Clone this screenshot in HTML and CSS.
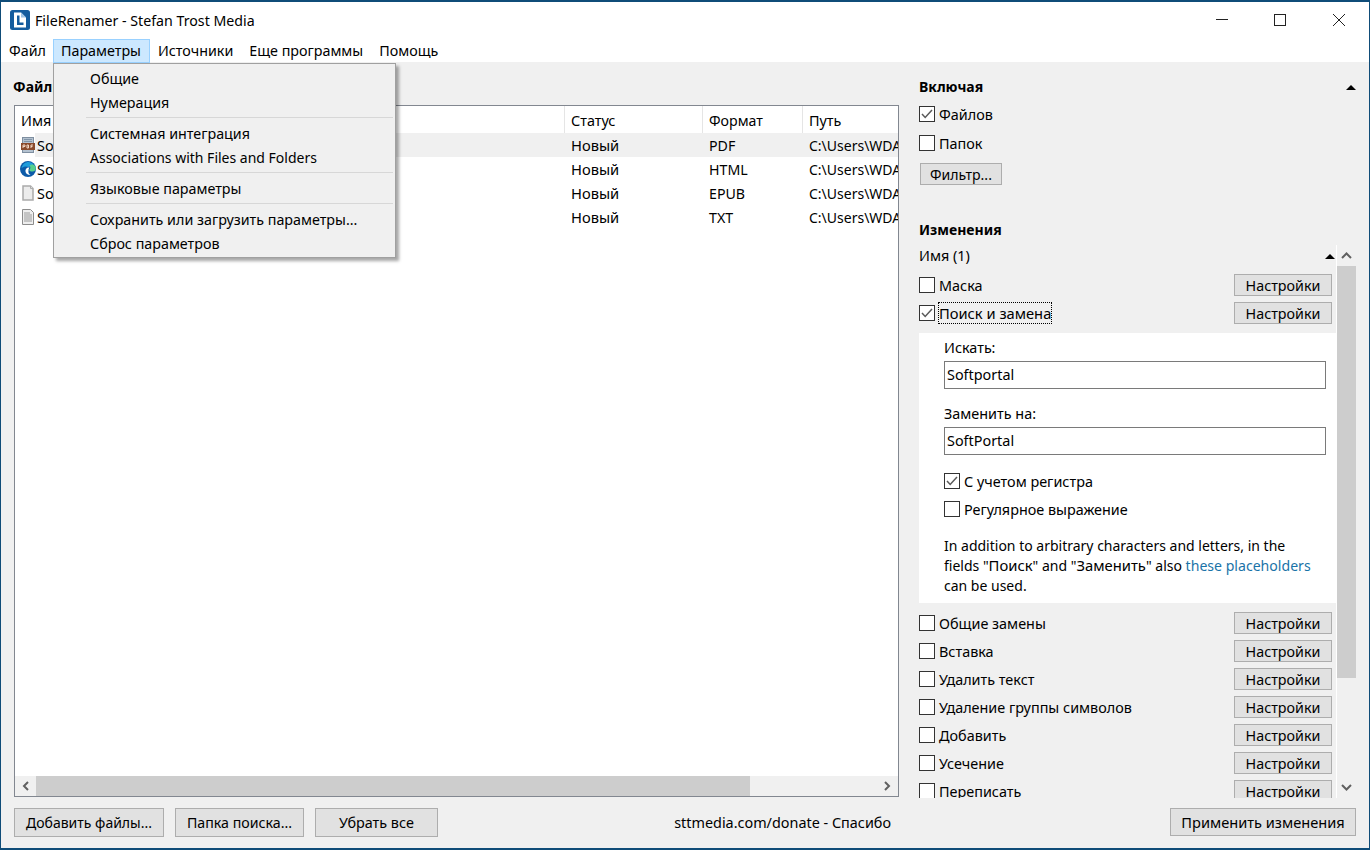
FILE: index.html
```html
<!DOCTYPE html>
<html lang="ru">
<head>
    <meta charset="UTF-8">
    <title>FileRenamer - Stefan Trost Media</title>
    <link rel="stylesheet" href="styles.css">
</head>
<body>
<div class="window">
    <div class="titlebar">
        <svg class="logo" width="22" height="22" viewBox="0 0 22 22">
            <rect width="20" height="20" x="1" y="1" rx="2.5" fill="#145c9e"/>
            <path d="M5 3.500h7l5 5v10H5z" fill="#fff"/>
            <path d="M8 6.500h2.500v7H14.500v2.500H8z" fill="#145c9e"/>
            <path d="M12 3.500l5 5h-5z" fill="#9fc4e6"/>
        </svg>
        <span class="title">FileRenamer - Stefan Trost Media</span>
        <div class="win-buttons">
            <svg width="58" height="30" viewBox="0 0 58 30"><path d="M24 14.500h12" stroke="#222" fill="none"/></svg>
            <svg width="58" height="30" viewBox="0 0 58 30"><rect x="24.500" y="9.500" width="11" height="11" stroke="#222" fill="none"/></svg>
            <svg width="58" height="30" viewBox="0 0 58 30"><path d="M25 9l12 12M37 9L25 21" stroke="#222" fill="none"/></svg>
        </div>
    </div>

    <nav class="menubar">
        <span class="menu-item">Файл</span>
        <span class="menu-item active">Параметры</span>
        <span class="menu-item">Источники</span>
        <span class="menu-item">Еще программы</span>
        <span class="menu-item">Помощь</span>
    </nav>

    <div class="dropdown">
        <div class="drop-item">Общие</div>
        <div class="drop-item">Нумерация</div>
        <div class="drop-sep"></div>
        <div class="drop-item">Системная интеграция</div>
        <div class="drop-item en">Associations with Files and Folders</div>
        <div class="drop-sep"></div>
        <div class="drop-item">Языковые параметры</div>
        <div class="drop-sep"></div>
        <div class="drop-item">Сохранить или загрузить параметры...</div>
        <div class="drop-item">Сброс параметров</div>
    </div>

    <div class="main">
        <section class="left">
            <h2 class="heading left-heading">Файлы</h2>
            <div class="listbox">
                <div class="list-row list-head">
                    <div class="col col-name">Имя</div>
                    <div class="col col-status">Статус</div>
                    <div class="col col-format">Формат</div>
                    <div class="col col-path">Путь</div>
                </div>
                <div class="list-row file selected">
                    <div class="col col-name">
                        <svg class="file-icon" width="16" height="16" viewBox="0 0 16 16">
                            <rect x="2.500" y="0.500" width="11" height="15" fill="#b4c2d0" stroke="#7f8fa0"/>
                            <path d="M4 2.500h8M4 4.500h8" stroke="#8295a8" fill="none"/>
                            <rect x="1" y="6" width="14" height="7" fill="#8a4a2c"/>
                            <path d="M3 8v3M3 8h2v1.500H3M7 8v3h1.500V8zM11 8v3M11 8h2M11 9.500h1.500" stroke="#f0d6c4" fill="none"/>
                        </svg>
                        <span>So</span>
                    </div>
                    <div class="col col-status">Новый</div>
                    <div class="col col-format">PDF</div>
                    <div class="col col-path">C:\Users\WDAG</div>
                </div>
                <div class="list-row file">
                    <div class="col col-name">
                        <svg class="file-icon" width="16" height="16" viewBox="0 0 16 16">
                            <circle cx="8" cy="8" r="8" fill="#0c5aa8"/>
                            <path d="M1.500 7C2.500 3 5.500 1 8.500 1c2 0 4 1 5 2.500L9 6C6 5 3.500 5.500 1.500 7z" fill="#1f9ddb"/>
                            <path d="M9.500 4.500c2-1.500 4.500-1 5.500.5 1 1.500 1 3.500 0 4.500-1 1-3.500 1.500-5 .5-1-.7-1-1.500 0-2 .5-1 .5-2.500-.5-3.500z" fill="#58d08c"/>
                            <path d="M9.500 6.500C7 6 5 8 5.500 10.500c.3 2 2 3.500 5 3.500-1.500-1-2.500-2.500-2-4.500 0-1.500.5-2.500 1-3z" fill="#fff"/>
                        </svg>
                        <span>So</span>
                    </div>
                    <div class="col col-status">Новый</div>
                    <div class="col col-format">HTML</div>
                    <div class="col col-path">C:\Users\WDAG</div>
                </div>
                <div class="list-row file">
                    <div class="col col-name">
                        <svg class="file-icon" width="16" height="16" viewBox="0 0 16 16">
                            <path d="M3 1h7.500L13 3.500V15H3z" fill="#ececec" stroke="#ababab" stroke-width="1.500"/>
                            <path d="M10.500 1v2.500H13" fill="#e0e0e0" stroke="#ababab"/>
                        </svg>
                        <span>So</span>
                    </div>
                    <div class="col col-status">Новый</div>
                    <div class="col col-format">EPUB</div>
                    <div class="col col-path">C:\Users\WDAG</div>
                </div>
                <div class="list-row file">
                    <div class="col col-name">
                        <svg class="file-icon" width="16" height="16" viewBox="0 0 16 16">
                            <path d="M2.500.500h8l3 3v12h-11z" fill="#eeeeee" stroke="#8c8c8c"/>
                            <path d="M4 4h6M4 6h8M4 8h8M4 10h8M4 12h8" stroke="#9a9a9a" fill="none"/>
                        </svg>
                        <span>So</span>
                    </div>
                    <div class="col col-status">Новый</div>
                    <div class="col col-format">TXT</div>
                    <div class="col col-path">C:\Users\WDAG</div>
                </div>
                <div class="list-fill"></div>
                <div class="hscroll">
                    <svg width="21" height="20" viewBox="0 0 21 20"><path d="M13 6l-4 4 4 4" stroke="#606060" stroke-width="2" fill="none"/></svg>
                    <div class="hthumb"></div>
                    <div class="htrack"></div>
                    <svg width="21" height="20" viewBox="0 0 21 20"><path d="M8 6l4 4-4 4" stroke="#606060" stroke-width="2" fill="none"/></svg>
                </div>
            </div>
            <div class="footer">
                <button class="btn btn-add">Добавить файлы...</button>
                <button class="btn btn-folder">Папка поиска...</button>
                <button class="btn btn-clear">Убрать все</button>
                <span class="donate">sttmedia.com/donate - Спасибо</span>
            </div>
        </section>

        <section class="right">
            <div class="group-head">
                <h2 class="heading">Включая</h2>
                <span class="caret"></span>
            </div>
            <div class="check-line first">
                <span class="check"><svg width="14" height="14" viewBox="0 0 14 14"><path d="M2 7l3.200 3.500L12 3" stroke="#5a5a5a" stroke-width="1.500" fill="none"/></svg></span>
                <span>Файлов</span>
            </div>
            <div class="check-line"><span class="check"></span><span>Папок</span></div>
            <button class="btn btn-filter">Фильтр...</button>

            <h2 class="heading changes">Изменения</h2>
            <div class="scroller">
                <div class="scroll-content">
                    <div class="name-head"><span>Имя (1)</span><span class="caret"></span></div>
                    <div class="opt-list">
                        <div class="opt"><span class="check"></span><span>Маска</span><button class="btn btn-set">Настройки</button></div>
                        <div class="opt">
                            <span class="check"><svg width="14" height="14" viewBox="0 0 14 14"><path d="M2 7l3.200 3.500L12 3" stroke="#5a5a5a" stroke-width="1.500" fill="none"/></svg></span>
                            <span class="focused">Поиск и замена</span>
                            <button class="btn btn-set">Настройки</button>
                        </div>
                    </div>
                    <div class="panel">
                        <label class="field-label">Искать:</label>
                        <div class="input">Softportal</div>
                        <label class="field-label second">Заменить на:</label>
                        <div class="input">SoftPortal</div>
                        <div class="panel-checks">
                            <div class="panel-check">
                                <span class="check"><svg width="14" height="14" viewBox="0 0 14 14"><path d="M2 7l3.200 3.500L12 3" stroke="#5a5a5a" stroke-width="1.500" fill="none"/></svg></span>
                                <span>С учетом регистра</span>
                            </div>
                            <div class="panel-check"><span class="check"></span><span>Регулярное выражение</span></div>
                        </div>
                        <p class="hint">In addition to arbitrary characters and letters, in the<br>fields "<span class="ru">Поиск</span>" and "<span class="ru">Заменить</span>" also <a class="link">these placeholders</a><br>can be used.</p>
                    </div>
                    <div class="opt-list">
                        <div class="opt"><span class="check"></span><span>Общие замены</span><button class="btn btn-set">Настройки</button></div>
                        <div class="opt"><span class="check"></span><span>Вставка</span><button class="btn btn-set">Настройки</button></div>
                        <div class="opt"><span class="check"></span><span>Удалить текст</span><button class="btn btn-set">Настройки</button></div>
                        <div class="opt"><span class="check"></span><span>Удаление группы символов</span><button class="btn btn-set">Настройки</button></div>
                        <div class="opt"><span class="check"></span><span>Добавить</span><button class="btn btn-set">Настройки</button></div>
                        <div class="opt"><span class="check"></span><span>Усечение</span><button class="btn btn-set">Настройки</button></div>
                        <div class="opt"><span class="check"></span><span>Переписать</span><button class="btn btn-set">Настройки</button></div>
                    </div>
                </div>
                <div class="vscroll">
                    <svg width="19" height="21" viewBox="0 0 19 21"><path d="M5 13l4.500-4.500L14 13" stroke="#606060" stroke-width="2" fill="none"/></svg>
                    <div class="vthumb"></div>
                    <div class="vtrack"></div>
                    <svg width="19" height="21" viewBox="0 0 19 21"><path d="M5 8l4.500 4.500L14 8" stroke="#606060" stroke-width="2" fill="none"/></svg>
                </div>
            </div>
            <div class="apply-row">
                <button class="btn btn-apply">Применить изменения</button>
            </div>
        </section>
    </div>
</div>
</body>
</html>
```
FILE: styles.css
```css
* {
    box-sizing: border-box;
}
html, body {
    margin: 0;
    height: 100%;
    overflow: hidden;
}
body {
    font-family: "Noto Sans", "Open Sans", sans-serif;
    font-size: 14.4px;
    color: #000;
}
.window {
    position: relative;
    width: 1370px;
    height: 850px;
    display: flex;
    flex-direction: column;
    border: 1px solid #0f4c78;
    border-top-width: 2px;
    border-bottom-width: 2px;
    background-color: #f0f0f0;
}
.en {
    font-size: 14px;
}

/* title bar */
.titlebar {
    height: 37px;
    padding-left: 8px;
    padding-bottom: 1px;
    display: flex;
    align-items: center;
    background-color: #fff;
}
.logo {
    margin-right: 4px;
}
.title {
    font-size: 14.2px;
}
.win-buttons {
    margin-left: auto;
    margin-right: 3px;
    display: flex;
}

/* menu */
.menubar {
    height: 23px;
    display: flex;
    background-color: #fff;
    font-size: 14.3px;
}
.menu-item {
    padding: 0 8px;
    line-height: 24px;
    height: 24px;
}
.menu-item:first-child {
    width: 52px;
}
.menu-item.active {
    width: 97px;
    background-color: #cce8ff;
    border: 1px solid #99d1ff;
    padding: 0 7px;
    line-height: 22px;
    position: relative;
    z-index: 3;
}
.dropdown {
    position: absolute;
    left: 52px;
    top: 61px;
    width: 343px;
    height: 195px;
    padding: 3px 2px 1px 32px;
    background-color: #f0f0f0;
    border: 1px solid #a0a0a0;
    box-shadow: 3px 3px 3px rgba(0, 0, 0, 0.35);
    z-index: 5;
}
.drop-item {
    height: 24px;
    line-height: 24px;
    padding-left: 4px;
    font-size: 14.3px;
}
.drop-item.en {
    font-size: 14px;
}
.drop-sep {
    height: 1px;
    margin: 2px 0 4px;
    background-color: #d7d7d7;
}

/* main area */
.main {
    flex: 1;
    min-height: 0;
    display: flex;
    padding: 0 13px;
    gap: 20px;
}
.heading {
    margin: 0;
    font-size: 14px;
    font-weight: bold;
    line-height: 20px;
}
.left {
    width: 885px;
    display: flex;
    flex-direction: column;
    padding-top: 15px;
}
.left-heading {
    margin-left: -1px;
}
.listbox {
    margin-top: 8px;
    height: 692px;
    display: flex;
    flex-direction: column;
    background-color: #fff;
    border: 1px solid #828790;
}
.list-row {
    display: flex;
    height: 24px;
    line-height: 25px;
    flex-shrink: 0;
}
.list-head {
    height: 27px;
    line-height: 30px;
}
.col {
    padding-left: 6px;
    white-space: nowrap;
    overflow: hidden;
}
.col-name {
    width: 550px;
}
.col-status {
    width: 138px;
}
.col-format {
    width: 100px;
    font-size: 14.2px;
}
.col-path {
    width: 95px;
    font-size: 14px;
}
.file .col-status {
    font-size: 14.7px;
}
.list-head .col {
    border-right: 1px solid #e5e5e5;
}
.list-head .col-path {
    border-right: none;
    font-size: 14.4px;
}
.file .col-name {
    display: flex;
    align-items: center;
    gap: 1px;
    padding-left: 5px;
}
.file.selected {
    background: linear-gradient(to right, #fff 20px, #f0f0f0 20px);
}
.file-icon {
    flex-shrink: 0;
}
.list-fill {
    flex: 1;
}
.hscroll {
    height: 20px;
    display: flex;
    background-color: #f0f0f0;
}
.hthumb {
    width: 714px;
    background-color: #cdcdcd;
}
.htrack {
    flex: 1;
}
.footer {
    margin-top: 11px;
    display: flex;
    align-items: flex-start;
}
.btn {
    font-family: inherit;
    font-size: 14.3px;
    color: #000;
    background-color: #e1e1e1;
    border: 1px solid #adadad;
    padding: 0;
    height: 22px;
}
.btn-add {
    width: 150px;
    height: 29px;
    font-size: 14px;
}
.btn-folder {
    width: 129px;
    height: 29px;
    margin-left: 11px;
    font-size: 14.2px;
}
.btn-clear {
    width: 123px;
    height: 29px;
    margin-left: 11px;
    font-size: 14.4px;
}
.donate {
    margin-left: auto;
    margin-right: 8px;
    line-height: 29px;
}

/* right column */
.right {
    width: 437px;
    display: flex;
    flex-direction: column;
    padding-top: 15px;
}
.group-head {
    display: flex;
    justify-content: space-between;
    align-items: center;
}
.caret {
    width: 0;
    height: 0;
    border-left: 5px solid transparent;
    border-right: 5px solid transparent;
    border-bottom: 5px solid #000;
}
.check {
    width: 16px;
    height: 16px;
    flex-shrink: 0;
    border: 1px solid #333;
    background-color: #fff;
    display: flex;
}
.check-line {
    display: flex;
    align-items: center;
    gap: 4px;
    height: 20px;
    margin-top: 9px;
}
.check-line.first {
    margin-top: 7px;
}
.btn-filter {
    width: 82px;
    margin: 10px 0 0 1px;
    font-size: 14.1px;
}
.changes {
    margin-top: 35px;
}
.scroller {
    margin-top: 5px;
    height: 553px;
    display: flex;
    overflow: hidden;
}
.scroll-content {
    width: 417px;
    overflow: hidden;
}
.name-head {
    height: 22px;
    line-height: 22px;
    display: flex;
    justify-content: space-between;
    align-items: center;
    margin-bottom: 7px;
    padding-right: 1px;
}
.opt-list {
    display: flex;
    flex-direction: column;
    gap: 6px;
}
.opt {
    display: flex;
    align-items: center;
    gap: 4px;
    height: 22px;
    padding-right: 4px;
}
.btn-set {
    width: 98px;
    margin-left: auto;
}
.focused {
    outline: 1px dotted #000;
    line-height: 20px;
    font-size: 14.7px;
}
.panel {
    margin: 9px 0;
    height: 270px;
    padding: 4px 10px 0 25px;
    background-color: #fff;
}
.field-label {
    display: block;
    line-height: 22px;
}
.field-label.second {
    margin-top: 14px;
}
.input {
    margin-top: 2px;
    height: 28px;
    line-height: 26px;
    padding-left: 2px;
    border: 1px solid #7a7a7a;
    background-color: #fff;
}
.panel-checks {
    margin-top: 16px;
    display: flex;
    flex-direction: column;
    gap: 8px;
}
.panel-check {
    display: flex;
    align-items: center;
    gap: 4px;
    height: 20px;
}
.hint {
    margin: 17px 0 0;
    line-height: 20px;
    font-size: 14px;
}
.ru {
    font-size: 14.8px;
    line-height: 1;
}
.link {
    color: #1a73a8;
    font-size: 14.1px;
    line-height: 1;
}
.vscroll {
    width: 20px;
    display: flex;
    flex-direction: column;
    border-left: 1px solid #fff;
    background-color: #f0f0f0;
}
.vthumb {
    height: 412px;
    background-color: #cdcdcd;
}
.vtrack {
    flex: 1;
}
.apply-row {
    margin-top: 10px;
    display: flex;
    justify-content: flex-end;
}
.btn-apply {
    width: 186px;
    height: 28px;
    font-size: 14.6px;
}
```
